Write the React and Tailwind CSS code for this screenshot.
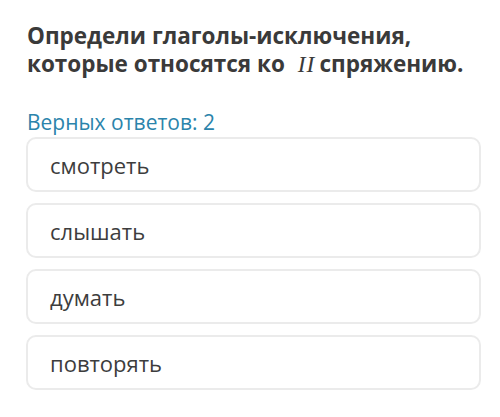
import React from 'react';

const options = ['смотреть', 'слышать', 'думать', 'повторять'];

export default function App() {
    return (
        <div className="w-[500px] h-[417px] bg-white pl-[26px] pr-[19px] pt-[22px]" style={{ fontFamily: '"Open Sans", sans-serif' }}>
            {/* Question */}
            <h1 className="text-[22.5px] leading-[28px] font-bold text-[#3a3a3a] pl-[1px]">
                Определи глаголы-исключения,<br />
                которые относятся ко{' '}
                <span className="inline-block ml-[7px] mr-[3px] pr-[1px] font-normal italic text-[23.5px] leading-[20px] tracking-[1px]" style={{ fontFamily: '"Liberation Serif", serif' }}>II</span>
                спряжению.
            </h1>

            <div className="mt-[30px] text-[21px] leading-[28px] text-[#2b84ab] pl-[1px]">
                Верных ответов: 2
            </div>

            {/* Answer options */}
            <div className="mt-[1px] flex flex-col gap-[11px]">
                {options.map(opt => (
                    <div
                        key={opt}
                        className="h-[55px] flex items-center rounded-[10px] border-2 border-[#ebebeb] pl-[22px] text-[22px] leading-[30px] text-[#3d3d3d]"
                    >
                        {opt}
                    </div>
                ))}
            </div>
        </div>
    );
}
